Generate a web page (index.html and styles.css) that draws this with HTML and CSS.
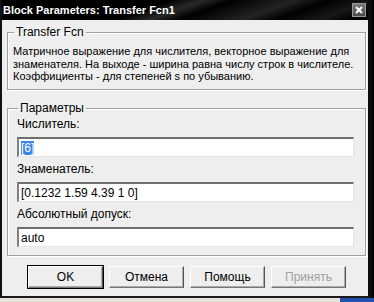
FILE: index.html
```html
<!DOCTYPE html>
<html lang="ru">
<head>
  <meta charset="UTF-8">
  <title>Block Parameters: Transfer Fcn1</title>
  <link rel="stylesheet" href="styles.css">
</head>
<body>

  <div class="window">
    <div class="titlebar">
      <span class="title">Block Parameters: Transfer Fcn1</span>
      <span class="close">
        <svg width="8" height="8" viewBox="0 0 8 8">
          <path d="M1 1 L7 7 M7 1 L1 7" stroke="#fff" stroke-width="2"/>
        </svg>
      </span>
    </div>

    <div class="content">
      <fieldset class="group group-desc">
        <legend>Transfer Fcn</legend>
        <p>Матричное выражение для числителя, векторное выражение для<br>
        знаменателя. На выходе - ширина равна числу строк в числителе.<br>
        Коэффициенты - для степеней s по убыванию.</p>
      </fieldset>

      <fieldset class="group group-params">
        <legend>Параметры</legend>
        <div class="field-label">Числитель:</div>
        <div class="field"><span class="selected">[6]</span></div>
        <div class="field-label">Знаменатель:</div>
        <div class="field">[0.1232 1.59 4.39 1 0]</div>
        <div class="field-label">Абсолютный допуск:</div>
        <div class="field">auto</div>
      </fieldset>

      <div class="buttons">
        <button class="btn btn-default">OK</button>
        <button class="btn">Отмена</button>
        <button class="btn">Помощь</button>
        <button class="btn" disabled>Принять</button>
      </div>
    </div>
  </div>

  <div class="desktop">
    <span class="task"></span>
  </div>

</body>
</html>
```

FILE: styles.css
```css
* { box-sizing: border-box; }

body {
  margin: 0;
  background-color: #050505;
  font-family: "Liberation Sans", Arial, sans-serif;
  font-size: 11px;
  color: #000;
}

.window {
  width: 372px;
  border-left: 2px solid #111;
  border-right: 4px solid #0c0c0c;
  border-bottom: 2px solid #1a1a1a;
}

.titlebar {
  height: 20px;
  display: flex;
  align-items: center;
  justify-content: space-between;
  padding: 0 2px 0 1px;
  background:
    linear-gradient(160deg, transparent 0%, transparent 40%, rgba(90,90,90,0.45) 48%, transparent 55%, rgba(70,70,70,0.5) 70%, transparent 78%, rgba(60,60,60,0.4) 88%, transparent 95%),
    #000;
}

.title {
  color: #fff;
  font-weight: bold;
  font-size: 11px;
}

.close {
  width: 14px;
  height: 14px;
  display: flex;
  align-items: center;
  justify-content: center;
  background: linear-gradient(#7a7a7a, #4a4a4a);
  border: 1px solid #9a9a9a;
}

.content {
  background-color: #eeeeee;
  height: 276px;
  padding: 6px 0 0 5px;
}

.group {
  margin: 0;
  width: 359px;
  border: 1px solid #a0a0a0;
  box-shadow: inset 1px 1px 0 #fff, 1px 1px 0 #fff;
}

.group legend {
  padding: 0 2px;
  margin-left: 1px;
  line-height: 13px;
  font-size: 12px;
}

.group-desc {
  height: 64px;
  padding: 6px 4px 0 5px;
}

.group-desc p {
  margin: 0;
  line-height: 12.5px;
}

.group-params {
  margin-top: 12px;
  height: 154px;
  padding: 3px 11px 0 9px;
}

.field-label {
  line-height: 13px;
  font-size: 12px;
  margin-bottom: 6px;
}

.field {
  height: 20px;
  margin-bottom: 6px;
  padding: 3px 2px 0;
  background-color: #fff;
  border-style: solid;
  border-width: 2px 1px 1px 2px;
  border-color: #6e6e6e #e4e4e4 #e4e4e4 #808080;
  font-size: 12px;
  line-height: 13px;
  white-space: nowrap;
}

.selected {
  background-color: #3d86e8;
  color: #fff;
}

.buttons {
  display: flex;
  gap: 6px;
  margin: 10px 0 0 21px;
}

.btn {
  width: 75px;
  height: 22px;
  padding: 0;
  font-family: inherit;
  font-size: 12px;
  background-color: #eeeeee;
  border: 1px solid;
  border-color: #fff #555 #777 #fff;
  box-shadow: inset -1px -1px 0 #aaa;
  color: #000;
}

.btn-default {
  outline: 1px solid #000;
}

.btn:disabled {
  color: #a0a0a0;
}

.desktop {
  height: 6px;
  background-color: #e4e4dc;
  display: flex;
  justify-content: flex-end;
}

.task {
  width: 34px;
  background-color: #2450b0;
}
```
